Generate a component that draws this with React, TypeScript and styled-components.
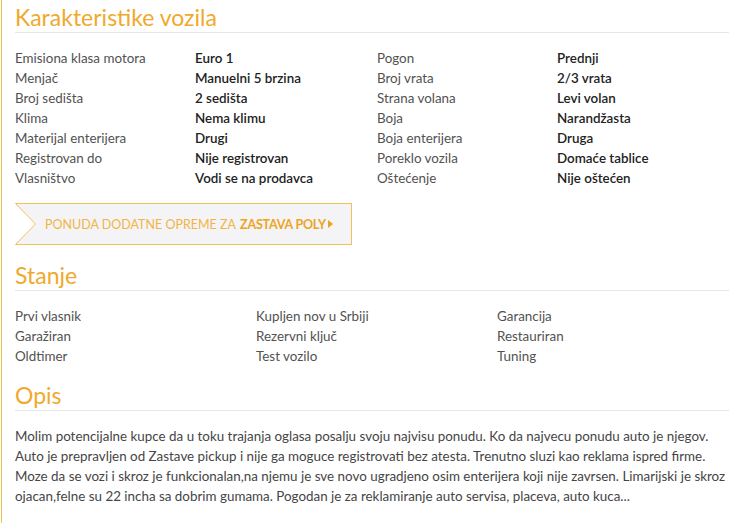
import React from "react";
import styled, { createGlobalStyle } from "styled-components";

const GlobalStyle = createGlobalStyle`
  html, body {
    margin: 0;
    padding: 0;
    background: #ffffff;
  }
  body {
    font-family: Lato, "Open Sans", "Liberation Sans", sans-serif;
    font-size: 13.4px;
    color: #555;
  }
`;

const Page = styled.div`
  margin-left: 1px;
  border-left: 1px solid #e9c44e;
  padding: 0 6px 26px 13px;
  min-height: 523px;
  box-sizing: border-box;
`;

const Section = styled.section<{ gap?: number }>`
  margin-top: ${({ gap }) => gap ?? 0}px;
`;

const Heading = styled.h2`
  margin: 0;
  height: 33px;
  padding-top: 4px;
  box-sizing: border-box;
  line-height: 27px;
  font-size: 23px;
  font-weight: 400;
  color: #f0a92c;
  border-bottom: 1px solid #e6e6e6;
`;

const Body = styled.div`
  padding-top: 15px;
`;

const SpecGrid = styled.div`
  display: grid;
  grid-template-columns: 180px 182px 180px 1fr;
  line-height: 20px;
`;

const Label = styled.span`
  color: #525252;
`;

const Value = styled.span`
  color: #222;
  font-weight: 600;
`;

const OfferButton = styled.a`
  position: relative;
  display: flex;
  align-items: center;
  margin-top: 15px;
  width: 337px;
  height: 42px;
  box-sizing: border-box;
  padding-left: 30px;
  background: #f4f4f6;
  border: 1px solid #ebc35a;
  border-left: none;
  color: #f1b445;
  font-size: 12.5px;
  text-transform: uppercase;
  text-decoration: none;
  white-space: nowrap;
  cursor: pointer;

  strong {
    color: #eca41f;
    font-weight: 700;
    margin-left: 4px;
    letter-spacing: -0.2px;
  }
`;

const Notch = styled.svg`
  position: absolute;
  left: 0;
  top: -1px;
  width: 22px;
  height: 42px;
`;

const Caret = styled.svg`
  width: 5px;
  height: 8px;
  margin-left: 2px;
`;

const FeatureGrid = styled.div`
  display: grid;
  grid-template-columns: 241px 241px 1fr;
  line-height: 20px;
  color: #525252;
`;

const Paragraph = styled.p`
  margin: 0;
  line-height: 20px;
  color: #454545;
`;

const specs: [string, string, string, string][] = [
  ["Emisiona klasa motora", "Euro 1", "Pogon", "Prednji"],
  ["Menjač", "Manuelni 5 brzina", "Broj vrata", "2/3 vrata"],
  ["Broj sedišta", "2 sedišta", "Strana volana", "Levi volan"],
  ["Klima", "Nema klimu", "Boja", "Narandžasta"],
  ["Materijal enterijera", "Drugi", "Boja enterijera", "Druga"],
  ["Registrovan do", "Nije registrovan", "Poreklo vozila", "Domaće tablice"],
  ["Vlasništvo", "Vodi se na prodavca", "Oštećenje", "Nije oštećen"],
];

const features = [
  "Prvi vlasnik",
  "Kupljen nov u Srbiji",
  "Garancija",
  "Garažiran",
  "Rezervni ključ",
  "Restauriran",
  "Oldtimer",
  "Test vozilo",
  "Tuning",
];

const App: React.FC = () => (
  <>
    <GlobalStyle />
    <Page>
      <Section>
        <Heading>Karakteristike vozila</Heading>
        <Body>
          <SpecGrid>
            {specs.map(([l1, v1, l2, v2]) => (
              <React.Fragment key={l1}>
                <Label>{l1}</Label>
                <Value>{v1}</Value>
                <Label>{l2}</Label>
                <Value>{v2}</Value>
              </React.Fragment>
            ))}
          </SpecGrid>
          <OfferButton>
            <Notch viewBox="0 0 22 42">
              <path d="M0 0 L21 21 L0 42 Z" fill="#ffffff" />
              <path d="M0.5 0.5 L20.5 21 L0.5 41.5" fill="none" stroke="#ebc35a" strokeWidth="1" />
            </Notch>
            Ponuda dodatne opreme za <strong>Zastava Poly</strong>
            <Caret viewBox="0 0 5 8">
              <path d="M0 0 L5 4 L0 8 Z" fill="#eca41f" />
            </Caret>
          </OfferButton>
        </Body>
      </Section>

      <Section gap={13}>
        <Heading>Stanje</Heading>
        <Body>
          <FeatureGrid>
            {features.map((f) => (
              <span key={f}>{f}</span>
            ))}
          </FeatureGrid>
        </Body>
      </Section>

      <Section gap={12}>
        <Heading>Opis</Heading>
        <Body>
          <Paragraph>
            Molim potencijalne kupce da u toku trajanja oglasa posalju svoju najvisu ponudu. Ko da najvecu ponudu auto je njegov.
            <br />
            Auto je prepravljen od Zastave pickup i nije ga moguce registrovati bez atesta. Trenutno sluzi kao reklama ispred firme.
            <br />
            Moze da se vozi i skroz je funkcionalan,na njemu je sve novo ugradjeno osim enterijera koji nije zavrsen. Limarijski je skroz
            <br />
            ojacan,felne su 22 incha sa dobrim gumama. Pogodan je za reklamiranje auto servisa, placeva, auto kuca...
          </Paragraph>
        </Body>
      </Section>
    </Page>
  </>
);

export default App;
